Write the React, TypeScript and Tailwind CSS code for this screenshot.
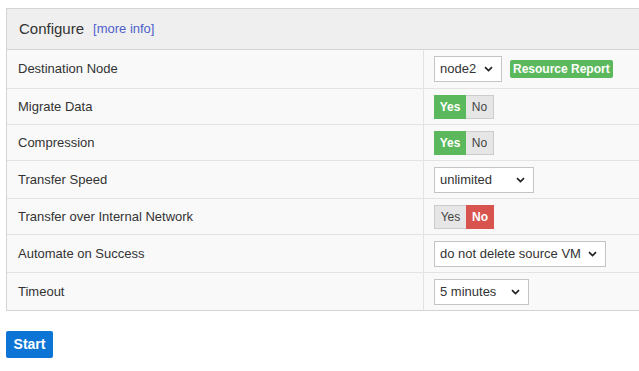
import React from "react";

const font = { fontFamily: '"Liberation Sans", Arial, sans-serif' };

function Chevron() {
  return (
    <svg width="9" height="6" viewBox="0 0 9 6" className="pointer-events-none absolute right-[8px] top-1/2 -translate-y-1/2">
      <path d="M1 1.2 L4.5 4.6 L8 1.2" fill="none" stroke="#222" strokeWidth="1.7" />
    </svg>
  );
}

function Select({ value, width }: { value: string; width: string }) {
  return (
    <div className={`relative h-[26px] ${width} border border-[#c4c4c4] bg-white`}>
      <div className="pl-[5px] pr-5 leading-[24px] text-[13px] text-[#333] whitespace-nowrap">{value}</div>
      <Chevron />
    </div>
  );
}

function Toggle({ yes }: { yes: boolean }) {
  return (
    <div className="flex h-[24px] text-[12px]">
      <span
        className={
          yes
            ? "w-[32px] flex items-center justify-center bg-[#5cb85c] text-white font-bold"
            : "w-[32px] flex items-center justify-center bg-[#e6e6e6] text-[#444] border border-[#ccc] border-r-0"
        }
      >
        Yes
      </span>
      <span
        className={
          yes
            ? "w-[28px] flex items-center justify-center bg-[#e6e6e6] text-[#444] border border-[#ccc] border-l-0"
            : "w-[28px] flex items-center justify-center bg-[#d9534f] text-white font-bold"
        }
      >
        No
      </span>
    </div>
  );
}

const rows: { label: string; h: string; control: React.ReactNode }[] = [
  {
    label: "Destination Node",
    h: "h-[39px]",
    control: (
      <div className="flex items-center gap-2">
        <Select value="node2" width="w-[68px]" />
        <span className="h-[18px] px-[3px] rounded-[2px] bg-[#5cb85c] text-white text-[12px] font-bold leading-[18px]">
          Resource Report
        </span>
      </div>
    ),
  },
  { label: "Migrate Data", h: "h-[36px]", control: <Toggle yes /> },
  { label: "Compression", h: "h-[36px]", control: <Toggle yes /> },
  { label: "Transfer Speed", h: "h-[38px]", control: <Select value="unlimited" width="w-[100px]" /> },
  { label: "Transfer over Internal Network", h: "h-[36px]", control: <Toggle yes={false} /> },
  { label: "Automate on Success", h: "h-[38px]", control: <Select value="do not delete source VM" width="w-[172px]" /> },
  { label: "Timeout", h: "h-[37px]", control: <Select value="5 minutes" width="w-[95px]" /> },
];

export default function App() {
  return (
    <div className="w-[639px] h-[371px] overflow-hidden bg-white pt-[8px] pl-[6px]" style={font}>
      <div className="w-[660px] border border-[#d4d4d4]">
        <div className="h-[41px] bg-[#efefef] border-b border-[#d4d4d4] flex items-center pl-[12px]">
          <span className="text-[15px] text-[#333]">Configure</span>
          <span className="ml-[9px] text-[13px] text-[#4e5fcb]">[more info]</span>
        </div>
        {rows.map((r, i) => (
          <div
            key={r.label}
            className={`flex ${r.h} bg-[#f9f9f9] ${i < rows.length - 1 ? "border-b border-[#e3e3e3]" : ""}`}
          >
            <div className="w-[417px] flex items-center pl-[11px] text-[13px] text-[#333] border-r border-[#e3e3e3]">
              {r.label}
            </div>
            <div className="flex-1 flex items-center pl-[10px]">{r.control}</div>
          </div>
        ))}
      </div>
      <button className="mt-[20px] w-[47px] h-[27px] rounded-[2px] bg-[#0b74d5] text-white text-[14px] font-bold">
        Start
      </button>
    </div>
  );
}
